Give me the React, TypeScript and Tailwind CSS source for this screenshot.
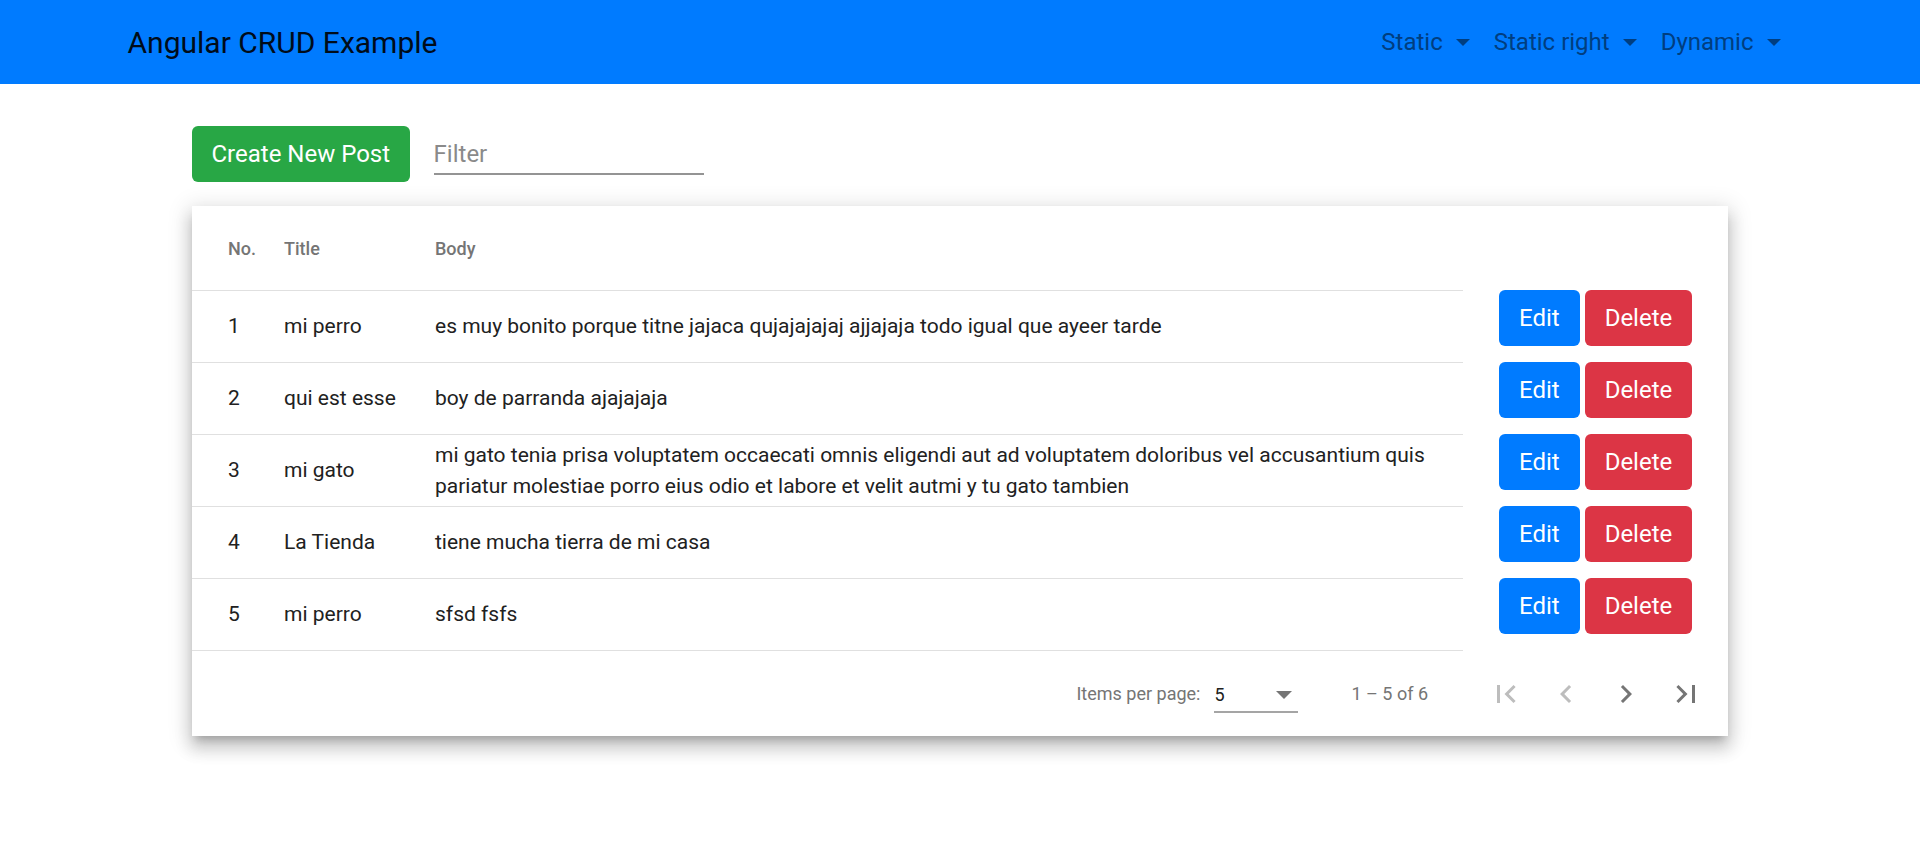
import React from "react";

interface Post {
  id: number;
  title: string;
  body: string;
}

const posts: Post[] = [
  {
    id: 1,
    title: "mi perro",
    body: "es muy bonito porque titne jajaca qujajajajaj ajjajaja todo igual que ayeer tarde",
  },
  { id: 2, title: "qui est esse", body: "boy de parranda ajajajaja" },
  {
    id: 3,
    title: "mi gato",
    body: "mi gato tenia prisa voluptatem occaecati omnis eligendi aut ad voluptatem doloribus vel accusantium quis pariatur molestiae porro eius odio et labore et velit autmi y tu gato tambien",
  },
  { id: 4, title: "La Tienda", body: "tiene mucha tierra de mi casa" },
  { id: 5, title: "mi perro", body: "sfsd fsfs" },
];

const Caret = () => (
  <span className="inline-block ml-[13px] w-0 h-0 border-t-[7px] border-t-[#003e80] border-x-[7px] border-x-transparent" />
);

const NavLink: React.FC<{ label: string }> = ({ label }) => (
  <a className="px-[12px] py-[12px] text-[24px] leading-[36px] text-[#003e80] flex items-center cursor-pointer">
    {label}
    <Caret />
  </a>
);

const PageIcon: React.FC<{ d: string; disabled?: boolean }> = ({ d, disabled }) => (
  <button className="w-[60px] h-[60px] flex items-center justify-center">
    <svg
      viewBox="0 0 24 24"
      className={disabled ? "w-[36px] h-[36px] fill-[#bdbdbd]" : "w-[36px] h-[36px] fill-[#757575]"}
    >
      <path d={d} />
    </svg>
  </button>
);

export default function App() {
  return (
    <div className="min-h-screen bg-white font-['Roboto',sans-serif]">
      <nav className="bg-[#007bff] h-[84px]">
        <div className="w-[1710px] mx-auto px-[22.5px] h-full flex items-center justify-between">
          <a className="text-[30px] leading-[45px] text-[#000c1a]">Angular CRUD Example</a>
          <div className="flex items-center">
            <NavLink label="Static" />
            <NavLink label="Static right" />
            <NavLink label="Dynamic" />
          </div>
        </div>
      </nav>

      <main className="w-[1536px] mx-auto mt-[42px]">
        <div className="flex items-start gap-[24px]">
          <button className="bg-[#28a745] text-white text-[24px] leading-[36px] px-[19.5px] py-[10px] rounded-[6px]">
            Create New Post
          </button>
          <div className="w-[270px] h-[49px] pt-[8px] flex items-center border-b-2 border-[#949494] text-[24px] text-[#8a8a8a]">
            Filter
          </div>
        </div>

        <div className="mt-[24px] bg-white shadow-[0_7px_8px_-4px_rgba(0,0,0,0.2),0_12px_15px_2px_rgba(0,0,0,0.14),0_4px_21px_4px_rgba(0,0,0,0.12)]">
          <div className="flex">
            <div className="w-[1271px] h-[85px] grid grid-cols-[92px_151px_1fr] items-center border-b border-[#e0e0e0] text-[18px] font-medium text-[#757575]">
              <div className="pl-[36px]">No.</div>
              <div>Title</div>
              <div>Body</div>
            </div>
          </div>

          {posts.map((p) => (
            <div key={p.id} className="flex">
              <div className="w-[1271px] h-[72px] grid grid-cols-[92px_151px_1fr] items-center border-b border-[#e0e0e0] text-[21px] leading-[31px] text-[#212121]">
                <div className="pl-[36px]">{p.id}</div>
                <div>{p.title}</div>
                <div className="pr-[24px]">{p.body}</div>
              </div>
              <div className="flex items-start gap-[5px] pl-[36px] -mt-px">
                <button className="bg-[#007bff] text-white text-[24px] leading-[36px] px-[20px] py-[10px] rounded-[6px]">
                  Edit
                </button>
                <button className="bg-[#dc3545] text-white text-[24px] leading-[36px] px-[20px] py-[10px] rounded-[6px]">
                  Delete
                </button>
              </div>
            </div>
          ))}

          <div className="h-[85px] flex items-center justify-end pr-[12px] text-[18px] text-[#757575]">
            <span>Items per page:</span>
            <div className="ml-[14px] w-[84px] h-[34px] mt-[4px] relative border-b-2 border-[#a5a5a5] flex items-center">
              <span className="text-[#212121]">5</span>
              <span className="absolute right-[6px] top-[12px] w-0 h-0 border-t-[8px] border-t-[#757575] border-x-[8px] border-x-transparent" />
            </div>
            <span className="ml-[53px] mr-[48px]">1 – 5 of 6</span>
            <PageIcon disabled d="M18.41 16.59L13.82 12l4.59-4.59L17 6l-6 6 6 6zM6 6h2v12H6z" />
            <PageIcon disabled d="M15.41 7.41L14 6l-6 6 6 6 1.41-1.41L10.83 12z" />
            <PageIcon d="M10 6L8.59 7.41 13.17 12l-4.58 4.59L10 18l6-6z" />
            <PageIcon d="M5.59 7.41L10.18 12l-4.59 4.59L7 18l6-6-6-6zM16 6h2v12h-2z" />
          </div>
        </div>
      </main>
    </div>
  );
}
